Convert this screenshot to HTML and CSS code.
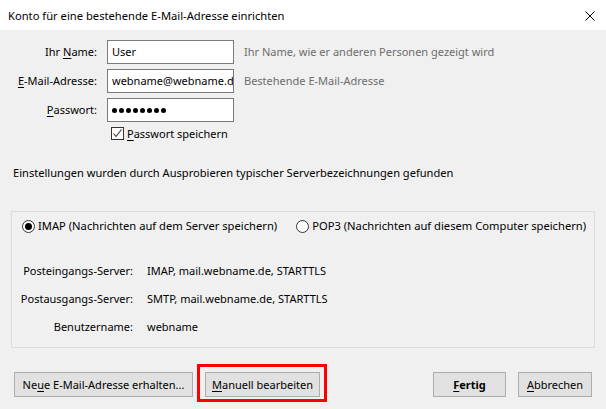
FILE: index.html
```html
<!DOCTYPE html>
<html lang="de">
<head>
<meta charset="utf-8">
<title>Konto einrichten</title>
<link rel="stylesheet" href="styles.css">
</head>
<body>
<div class="dialog">
  <header class="titlebar">
    <span class="title">Konto für eine bestehende E-Mail-Adresse einrichten</span>
    <svg class="close" width="10" height="10" viewBox="0 0 10 10"><path d="M0.5 0.5L9.5 9.5M9.5 0.5L0.5 9.5" stroke="#000" stroke-width="1" fill="none"/></svg>
  </header>
  <main class="content">
    <div class="form">
      <label class="lbl">Ihr <u>N</u>ame:</label>
      <div class="field">User</div>
      <span class="hint">Ihr Name, wie er anderen Personen gezeigt wird</span>

      <label class="lbl"><u>E</u>-Mail-Adresse:</label>
      <div class="field">webname@webname.de</div>
      <span class="hint">Bestehende E-Mail-Adresse</span>

      <label class="lbl"><u>P</u>asswort:</label>
      <div class="field dots"><i></i><i></i><i></i><i></i><i></i><i></i><i></i><i></i></div>
      <span class="hint"></span>

      <div class="check">
        <span class="box"><svg width="11" height="11" viewBox="0 0 11 11"><path d="M1.5 5.5L4 8.5L9.5 1.5" stroke="#333" stroke-width="1.1" fill="none"/></svg></span>
        <span><u>P</u>asswort speichern</span>
      </div>
    </div>

    <p class="status">Einstellungen wurden durch Ausprobieren typischer Serverbezeichnungen gefunden</p>

    <section class="group">
      <div class="radios">
        <label class="radio"><span class="circle on"></span>IMAP (Nachrichten auf dem Server speichern)</label>
        <label class="radio"><span class="circle"></span>POP3 (Nachrichten auf diesem Computer speichern)</label>
      </div>
      <div class="servers">
        <span class="slbl">Posteingangs-Server:</span><span>IMAP, mail.webname.de, STARTTLS</span>
        <span class="slbl">Postausgangs-Server:</span><span>SMTP, mail.webname.de, STARTTLS</span>
        <span class="slbl">Benutzername:</span><span>webname</span>
      </div>
    </section>
  </main>
  <footer class="buttons">
    <button class="btn btn-new">Ne<u>u</u>e E-Mail-Adresse erhalten...</button>
    <div class="highlight">
      <button class="btn btn-manual"><u>M</u>anuell bearbeiten</button>
    </div>
    <button class="btn btn-done"><u>F</u>ertig</button>
    <button class="btn btn-cancel"><u>A</u>bbrechen</button>
  </footer>
</div>
</body>
</html>
```

FILE: styles.css
```css
* { box-sizing: border-box; margin: 0; padding: 0; }
html, body { width: 606px; height: 409px; overflow: hidden; }
body {
  background: #f0f0f0;
  font-family: "Noto Sans", sans-serif;
  font-size: 11px;
  line-height: 16px;
  color: #000;
}
u { text-decoration: underline; text-underline-offset: 2px; }

.titlebar {
  height: 30px;
  background: #fff;
  display: flex;
  align-items: center;
  justify-content: space-between;
  padding: 1px 11px 0 8px;
}
.title { font-size: 11.2px; }
.close { display: block; }

.form {
  display: grid;
  grid-template-columns: 97px 127px auto;
  column-gap: 10px;
  row-gap: 5px;
  padding-top: 10px;
  align-items: center;
}
.lbl { text-align: right; white-space: nowrap; }
.field {
  height: 24px;
  border: 1px solid #7a7a7a;
  background: #fff;
  padding: 0 4px;
  line-height: 22px;
  white-space: nowrap;
  overflow: hidden;
}
.hint { color: #6d6d6d; white-space: nowrap; }
.dots { display: flex; align-items: center; gap: 2px; }
.dots i { display: block; width: 5px; height: 5px; border-radius: 50%; background: #000; }

.check {
  grid-column: 2 / span 2;
  display: flex;
  align-items: center;
  gap: 3px;
  padding-left: 4px;
  height: 13px;
}
.box {
  width: 13px; height: 13px;
  border: 1px solid #333;
  background: #fff;
  display: flex; align-items: center; justify-content: center;
}
.box svg { display: block; }

.status { margin-top: 25px; padding-left: 13px; font-size: 11.1px; }

.group {
  margin: 30px 11px 0 11px;
  border: 1px solid #dcdcdc;
  padding: 6px 0 12px 0;
}
.radios { display: flex; gap: 19px; padding-left: 10px; font-size: 11.2px; }
.radio { display: flex; align-items: center; gap: 3px; white-space: nowrap; }
.circle {
  width: 13px; height: 13px;
  border: 1px solid #333;
  border-radius: 50%;
  background: #fff;
  display: flex; align-items: center; justify-content: center;
}
.circle.on::after {
  content: "";
  width: 7px; height: 7px;
  border-radius: 50%;
  background: #000;
}
.servers {
  display: grid;
  grid-template-columns: 121px auto;
  column-gap: 14px;
  row-gap: 12px;
  margin-top: 29px;
  white-space: nowrap;
}
.slbl { text-align: right; }

.buttons {
  display: flex;
  align-items: flex-start;
  margin-top: 16px;
  padding: 0 14px;
}
.btn {
  font: inherit;
  color: #000;
  height: 25px;
  background: #e1e1e1;
  border: 1px solid #adadad;
  text-align: center;
  white-space: nowrap;
}
.btn-new { width: 179px; margin-top: 8px; }
.highlight {
  margin-left: 4px;
  border: 3px solid #ff0000;
  padding: 5px 4px 2px 5px;
}
.btn-manual { width: 115px; display: block; }
.btn-done { width: 73px; margin-left: auto; margin-top: 8px; font-weight: bold; }
.btn-cancel { width: 74px; margin-left: 12px; margin-top: 8px; }
```
